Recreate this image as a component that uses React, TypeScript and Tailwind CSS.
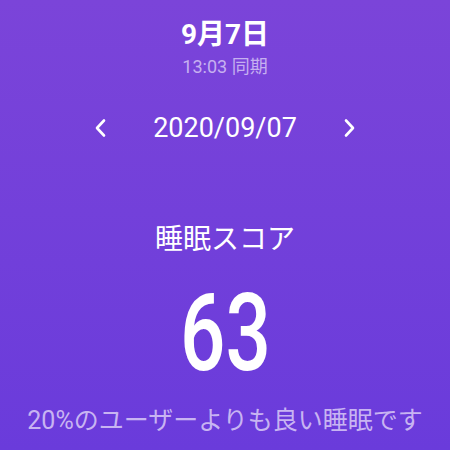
import React from "react";

export default function App() {
  const jp = { fontFamily: 'Roboto, "Noto Sans CJK JP", sans-serif' };
  return (
    <div
      className="w-[450px] h-[450px] overflow-hidden flex flex-col items-center bg-gradient-to-b from-[#7b44d9] to-[#6a3bdb] text-white"
      style={jp}
    >
      <div className="mt-[20px] text-[28px] font-bold leading-[30px]">9月7日</div>
      <div className="mt-[6px] text-[18px] leading-[22px] text-[#c6b0f0]">13:03 同期</div>
      <div className="mt-[33px] w-full flex items-center justify-between px-[93px] h-[34px]">
        <svg width="15" height="20" viewBox="0 0 15 20" fill="none" stroke="white" strokeWidth="2.6" strokeLinecap="round" strokeLinejoin="round">
          <path d="M11 2.5 L4 10 L11 17.5" />
        </svg>
        <div className="text-[27px] leading-[34px]">2020/09/07</div>
        <svg width="15" height="20" viewBox="0 0 15 20" fill="none" stroke="white" strokeWidth="2.6" strokeLinecap="round" strokeLinejoin="round">
          <path d="M4 2.5 L11 10 L4 17.5" />
        </svg>
      </div>
      <div className="mt-[77px] text-[28px] leading-[36px]">睡眠スコア</div>
      <div className="mt-[21px] text-[108px] font-medium leading-[108px] scale-x-[0.74]">63</div>
      <div className="mt-[19px] text-[25px] leading-[30px] text-[#c8b4f2] whitespace-nowrap">20%のユーザーよりも良い睡眠です</div>
    </div>
  );
}
